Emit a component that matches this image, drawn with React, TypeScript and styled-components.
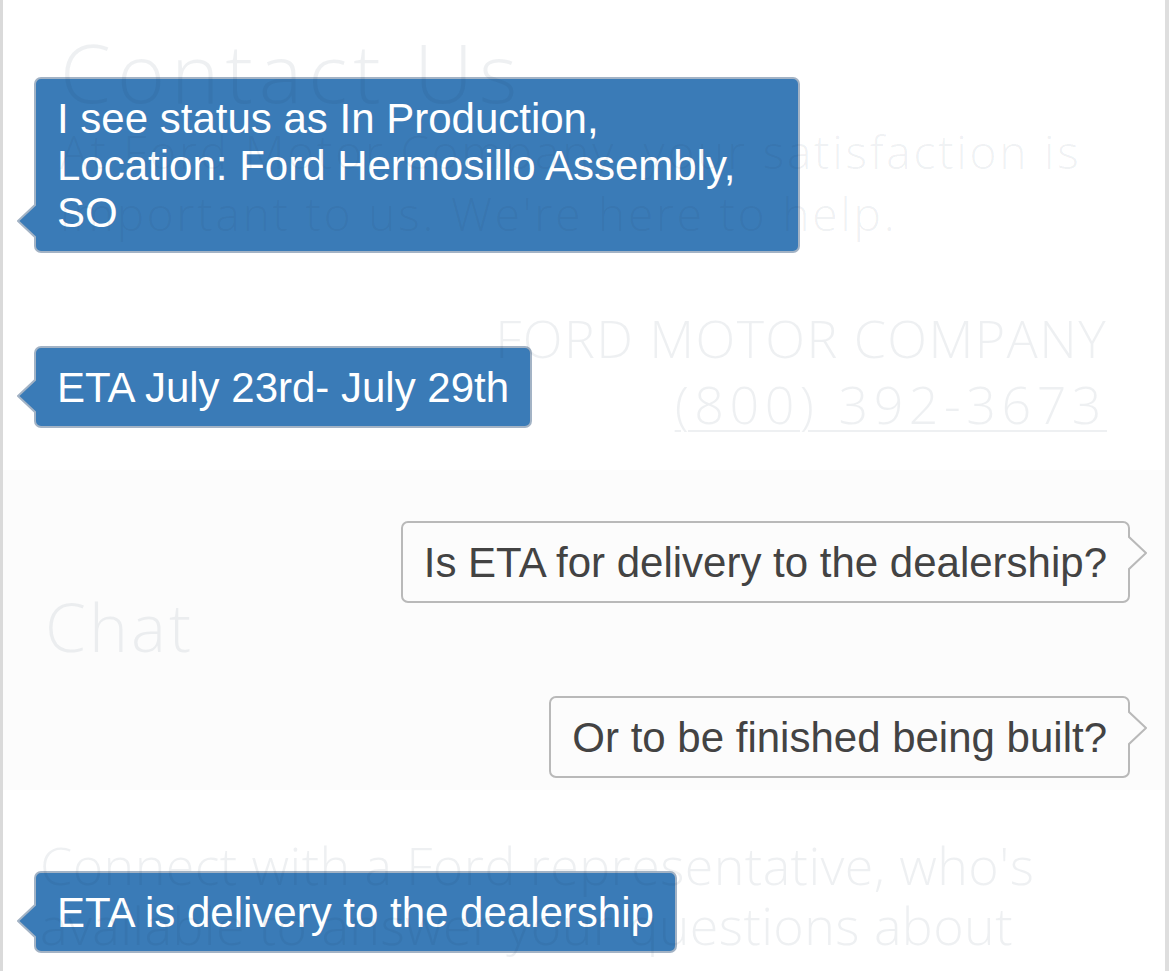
import React from 'react';
import styled, { createGlobalStyle } from 'styled-components';

const GlobalStyle = createGlobalStyle`
  html, body {
    margin: 0;
    padding: 0;
    background: #ffffff;
  }
  * {
    box-sizing: border-box;
  }
`

const PageStyled = styled.div`
  position: relative;
  width: 1169px;
  height: 971px;
  overflow: hidden;
  background: #ffffff;
  border-left: 3px solid #dadada;
  border-right: 4px solid #dedede;
`

const ChatListStyled = styled.div`
  display: flex;
  flex-direction: column;
  gap: 93px;
  padding: 77px 35px 0 31px;
`

const BubbleStyled = styled.div<{ $mine?: boolean }>`
  position: relative;
  align-self: ${p => p.$mine ? 'flex-end' : 'flex-start'};
  max-width: 766px;
  padding: 16px 21px 15px;
  border: 2px solid ${p => p.$mine ? '#bcbcbc' : '#a3b3c5'};
  border-radius: 7px;
  background: ${p => p.$mine ? '#ffffff' : '#3a7bb7'};
  color: ${p => p.$mine ? '#444444' : '#ffffff'};
  font-family: "Liberation Sans", Arial, sans-serif;
  font-size: 42px;
  line-height: 47px;
`

const TailStyled = styled.svg<{ $mine?: boolean }>`
  position: absolute;
  width: 20px;
  height: 36px;
  ${p => p.$mine
    ? 'right: -20px; top: 12px;'
    : 'left: -20px; bottom: 12px;'}
`

// faint page that shows through the chat
const GhostLayerStyled = styled.div`
  position: absolute;
  inset: 0;
  pointer-events: none;
  display: flex;
  flex-direction: column;
  font-family: "Open Sans", "DejaVu Sans", sans-serif;
  font-weight: 300;
  color: rgba(30, 55, 80, 0.075);
`

const GhostSectionStyled = styled.div<{ $height?: number; $tint?: boolean }>`
  display: flex;
  flex-direction: column;
  height: ${p => p.$height ? `${p.$height}px` : 'auto'};
  flex: ${p => p.$height ? 'none' : '1'};
  background: ${p => p.$tint ? 'rgba(0, 0, 0, 0.01)' : 'transparent'};
`

const GhostTextStyled = styled.div<{ $size: number; $lh?: number; $top: number; $left?: number; $right?: boolean; $ls?: number }>`
  font-size: ${p => p.$size}px;
  line-height: ${p => p.$lh ? `${p.$lh}px` : '1.2'};
  letter-spacing: ${p => p.$ls ?? 0}px;
  margin-top: ${p => p.$top}px;
  padding-left: ${p => p.$left ?? 0}px;
  padding-right: ${p => p.$right ? 58 : 0}px;
  text-align: ${p => p.$right ? 'right' : 'left'};
  white-space: nowrap;
`

const PhoneStyled = styled.span`
  text-decoration: underline;
  text-decoration-thickness: 2px;
  text-underline-offset: 6px;
`

function Tail({ mine }: { mine?: boolean }) {
  const fill = mine ? '#ffffff' : '#3a7bb7'
  const stroke = mine ? '#bcbcbc' : '#a3b3c5'
  const pts = mine ? '0,1 18,18 0,35' : '20,1 2,18 20,35'
  return <TailStyled $mine={mine} viewBox="0 0 20 36">
    <polygon points={pts} fill={fill}/>
    <polyline points={pts} fill="none" stroke={stroke} strokeWidth={2} strokeLinejoin="round"/>
  </TailStyled>
}

function Bubble({ mine, children }: { mine?: boolean; children: React.ReactNode }) {
  return <BubbleStyled $mine={mine}>
    {children}
    <Tail mine={mine}/>
  </BubbleStyled>
}

export default function App() {
  return <>
    <GlobalStyle/>
    <PageStyled>
      <ChatListStyled>
        <Bubble>I see status as In Production,<br/>Location: Ford Hermosillo Assembly, SO</Bubble>
        <Bubble>ETA July 23rd- July 29th</Bubble>
        <Bubble mine>Is ETA for delivery to the dealership?</Bubble>
        <Bubble mine>Or to be finished being built?</Bubble>
        <Bubble>ETA is delivery to the dealership</Bubble>
      </ChatListStyled>

      <GhostLayerStyled>
        <GhostSectionStyled $height={470}>
          <GhostTextStyled $size={82} $top={22} $left={57} $ls={6}>Contact Us</GhostTextStyled>
          <GhostTextStyled $size={46} $lh={62} $top={0} $left={57} $ls={2.8}>
            At Ford Motor Company, your satisfaction is<br/>
            important to us. We're here to help.
          </GhostTextStyled>
          <GhostTextStyled $size={52} $top={63} $right $ls={1.4}>FORD MOTOR COMPANY</GhostTextStyled>
          <GhostTextStyled $size={52} $top={3} $right $ls={5.5}><PhoneStyled>(800) 392-3673</PhoneStyled></GhostTextStyled>
        </GhostSectionStyled>
        <GhostSectionStyled $height={320} $tint>
          <GhostTextStyled $size={66} $top={117} $left={42} $ls={3}>Chat</GhostTextStyled>
        </GhostSectionStyled>
        <GhostSectionStyled>
          <GhostTextStyled $size={52} $lh={60} $top={45} $left={37} $ls={0.4}>
            Connect with a Ford representative, who's<br/>
            available to answer your questions about
          </GhostTextStyled>
        </GhostSectionStyled>
      </GhostLayerStyled>
    </PageStyled>
  </>
}
